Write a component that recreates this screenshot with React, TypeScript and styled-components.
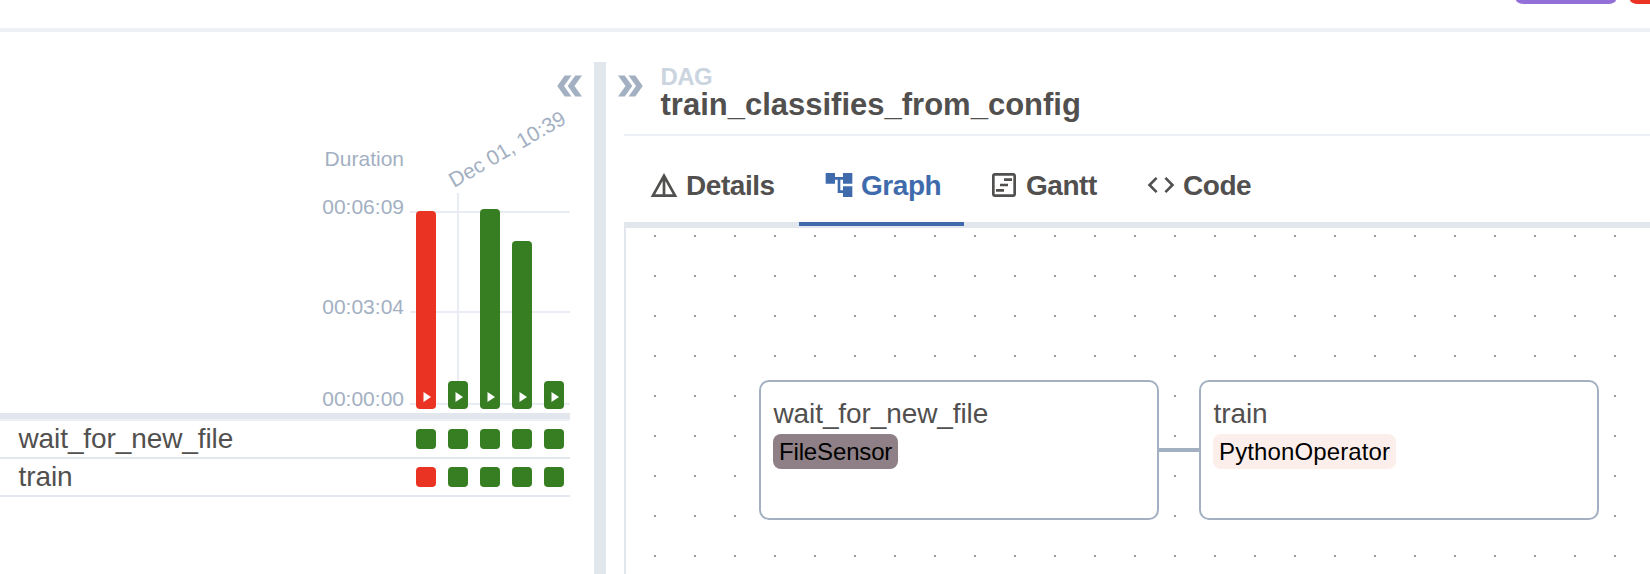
import React from "react";
import styled, { createGlobalStyle } from "styled-components";

const colors = {
  text: "#51504f",
  muted: "#a3b0c2",
  faint: "#cbd5e0",
  line: "#e2e7ee",
  lightLine: "#edf1f6",
  active: "#3f6bad",
  success: "#377e22",
  failed: "#ea3323",
};

const GlobalStyle = createGlobalStyle`
  * { box-sizing: border-box; }
  body {
    margin: 0;
    background: #fff;
    color: ${colors.text};
    font-family: "Liberation Sans", Arial, sans-serif;
    overflow: hidden;
  }
`;

const Page = styled.div`
  display: flex;
  flex-direction: column;
  height: 574px;
  overflow: hidden;
`;

const StatusBar = styled.header`
  display: flex;
  flex: none;
  justify-content: flex-end;
  align-items: flex-start;
  gap: 14px;
  height: 32px;
  border-bottom: 4px solid ${colors.lightLine};
`;

const StatusPill = styled.div<{ $color: string; $width: number; $last?: boolean }>`
  width: ${(p) => p.$width}px;
  height: 4px;
  background: ${(p) => p.$color};
  border-radius: 0 0 ${(p) => (p.$last ? 0 : 8)}px 8px / 0 0 ${(p) => (p.$last ? 0 : 4)}px 4px;
`;

const Main = styled.main`
  display: flex;
  flex: 1;
  margin-top: 30px;
`;

const GridPanel = styled.section`
  width: 594px;
  flex: none;
`;

const PanelTop = styled.div`
  display: flex;
  justify-content: flex-end;
  height: 42px;
  padding: 6px 6px 0 0;
`;

const ToggleButton = styled.button<{ $flip?: boolean }>`
  display: flex;
  flex: none;
  width: 36px;
  height: 36px;
  padding: 0;
  border: 0;
  background: none;
  color: ${colors.muted};
  transform: ${(p) => (p.$flip ? "rotate(180deg)" : "none")};
`;

const Chart = styled.div`
  display: flex;
  width: 570px;
  height: 315px;
  border-bottom: 6px solid ${colors.line};
`;

const AxisLabels = styled.div`
  width: 404px;
  padding-top: 44px;
  text-align: right;
`;

const AxisLabel = styled.div<{ $gap?: number }>`
  margin-top: ${(p) => p.$gap ?? 0}px;
  color: ${colors.muted};
  font-size: 21px;
  line-height: 22px;
`;

const Plot = styled.div`
  display: flex;
  align-items: flex-end;
  gap: 12px;
  width: 160px;
  height: 216px;
  margin: 89px 0 0 6px;
  padding-left: 6px;
  background-image: linear-gradient(#e9edf3, #e9edf3), linear-gradient(#e9edf3, #e9edf3),
    linear-gradient(#e9edf3, #e9edf3), linear-gradient(#e9edf3, #e9edf3);
  background-repeat: no-repeat;
  background-size: 160px 2px, 160px 2px, 160px 2px, 2px 216px;
  background-position: 0 18px, 0 118px, 0 210px, 47px 0;
`;

const Bar = styled.div<{ $height: number; $failed?: boolean }>`
  position: relative;
  display: flex;
  align-items: flex-end;
  justify-content: center;
  width: 20px;
  height: ${(p) => p.$height}px;
  padding: 0 0 7px 1px;
  border-radius: 4px;
  background: ${(p) => (p.$failed ? colors.failed : colors.success)};
`;

const RunDate = styled.span`
  position: absolute;
  left: 6px;
  bottom: 217px;
  color: ${colors.muted};
  font-size: 21px;
  line-height: 22px;
  white-space: nowrap;
  transform: rotate(-30deg);
  transform-origin: 0 18px;
`;

const TaskRow = styled.div<{ $first?: boolean }>`
  display: flex;
  align-items: center;
  width: 570px;
  height: ${(p) => (p.$first ? 40 : 38)}px;
  border-top: ${(p) => (p.$first ? `2px solid ${colors.lightLine}` : "0")};
  border-bottom: 2px solid ${colors.line};
`;

const TaskName = styled.span`
  width: 416px;
  padding-left: 18.5px;
  font-size: 28px;
  line-height: 36px;
  letter-spacing: -0.1px;
`;

const Instances = styled.div`
  display: flex;
  gap: 12px;
`;

const Instance = styled.div<{ $failed?: boolean }>`
  width: 20px;
  height: 20px;
  border-radius: 4px;
  background: ${(p) => (p.$failed ? colors.failed : colors.success)};
`;

const Divider = styled.div`
  width: 12px;
  flex: none;
  background: ${colors.line};
`;

const DetailPanel = styled.section`
  display: flex;
  flex: 1;
  flex-direction: column;
  min-width: 0;
`;

const Heading = styled.div`
  display: flex;
  gap: 12.5px;
  height: 72px;
  padding: 6px 0 0 6px;
`;

const Titles = styled.div`
  margin-top: -3px;
`;

const Kind = styled.div`
  color: ${colors.faint};
  font-size: 24px;
  font-weight: 700;
  line-height: 24px;
  letter-spacing: -0.6px;
`;

const Title = styled.h1`
  margin: -1px 0 0;
  font-size: 31px;
  font-weight: 700;
  line-height: 34px;
`;

const Tabs = styled.nav`
  display: flex;
  flex: none;
  height: 92px;
  margin-left: 18px;
  padding-top: 12px;
  border-top: 2px solid ${colors.lightLine};
`;

const Tab = styled.button<{ $width: number; $active?: boolean }>`
  display: flex;
  align-items: center;
  gap: 6px;
  width: ${(p) => p.$width}px;
  padding: 0 0 0 24px;
  border: 0;
  border-bottom: 4px solid ${(p) => (p.$active ? colors.active : colors.line)};
  background: none;
  color: ${(p) => (p.$active ? colors.active : colors.text)};
  font: 700 28px/32px "Liberation Sans", Arial, sans-serif;
  letter-spacing: -0.45px;
  white-space: nowrap;
`;

const TabLabel = styled.span`
  padding-top: 2px;
`;

const TabFiller = styled.div`
  flex: 1;
  border-bottom: 4px solid ${colors.line};
`;

const Icon = styled.svg`
  flex: none;
  fill: currentColor;
`;

const Canvas = styled.div`
  position: relative;
  flex: 1;
  margin-left: 18px;
  border-top: 2px solid ${colors.line};
  border-left: 2px solid ${colors.line};
  background-image: conic-gradient(from 270deg at 2px 2px, #9c9c9c 90deg, transparent 0);
  background-size: 40px 40px;
  background-position: 28px 7px;
`;

const Node = styled.div<{ $x: number }>`
  position: absolute;
  left: ${(p) => p.$x}px;
  top: 152px;
  width: 400px;
  height: 140px;
  padding: 16px 12px;
  border: 2px solid ${colors.muted};
  border-radius: 10px;
  background: #fff;
`;

const NodeName = styled.div`
  padding-left: 0.5px;
  font-size: 28px;
  line-height: 32px;
  letter-spacing: -0.1px;
`;

const Operator = styled.span<{ $color: string; $width: number; $tracking: number }>`
  display: block;
  width: ${(p) => p.$width}px;
  height: 35px;
  margin-top: 4px;
  padding-left: 6px;
  border-radius: 8px;
  background: ${(p) => p.$color};
  color: #000;
  font-size: 24px;
  line-height: 35px;
  letter-spacing: ${(p) => p.$tracking}px;
`;

const Edge = styled.div`
  position: absolute;
  left: 533px;
  top: 220px;
  width: 40px;
  height: 4px;
  background: ${colors.muted};
`;

const DoubleArrow = () => (
  <Icon width="36" height="36" viewBox="0 0 24 24">
    <path d="M15.5 5H11l5 7-5 7h4.5l5-7z" />
    <path d="M8.5 5H4l5 7-5 7h4.5l5-7z" />
  </Icon>
);

const tabs = [
  { name: "Details", width: 175, path: "M12 3 2 21h20L12 3zm1 5.92L18.6 19H13V8.92zm-2 0V19H5.4L11 8.92z" },
  { name: "Graph", width: 165, path: "M22 11V3h-7v3H9V3H2v8h7V8h2v10h4v3h7v-8h-7v3h-2V8h2v3z" },
  {
    name: "Gantt",
    width: 157,
    path: "M19 3H5c-1.1 0-2 .9-2 2v14c0 1.1.9 2 2 2h14c1.1 0 2-.9 2-2V5c0-1.1-.9-2-2-2zm0 16H5V5h14v14zM12 7h6v2h-6zM9 11h6v2H9zM6 15h6v2H6z",
  },
  {
    name: "Code",
    width: 154,
    path: "M9.4 16.6 4.8 12l4.6-4.6L8 6l-6 6 6 6 1.4-1.4zm5.2 0 4.6-4.6-4.6-4.6L16 6l6 6-6 6-1.4-1.4z",
  },
];

const runs = [
  { height: 198, failed: true },
  { height: 28, date: "Dec 01, 10:39" },
  { height: 200 },
  { height: 168 },
  { height: 28 },
];

const tasks = [
  { name: "wait_for_new_file", failed: [false, false, false, false, false] },
  { name: "train", failed: [true, false, false, false, false] },
];

export default function App() {
  return (
    <Page>
      <GlobalStyle />
      <StatusBar>
        <StatusPill $color="#9370d8" $width={100} />
        <StatusPill $color={colors.failed} $width={20} $last />
      </StatusBar>
      <Main>
        <GridPanel>
          <PanelTop>
            <ToggleButton $flip aria-label="Collapse grid">
              <DoubleArrow />
            </ToggleButton>
          </PanelTop>
          <Chart>
            <AxisLabels>
              <AxisLabel>Duration</AxisLabel>
              <AxisLabel $gap={26}>00:06:09</AxisLabel>
              <AxisLabel $gap={78}>00:03:04</AxisLabel>
              <AxisLabel $gap={70}>00:00:00</AxisLabel>
            </AxisLabels>
            <Plot>
              {runs.map((run, i) => (
                <Bar key={i} $height={run.height} $failed={run.failed}>
                  {run.date && <RunDate>{run.date}</RunDate>}
                  <svg width="8" height="10" viewBox="0 0 8 10">
                    <path d="M0.5 0v10L8 5z" fill="#fff" />
                  </svg>
                </Bar>
              ))}
            </Plot>
          </Chart>
          {tasks.map((task, i) => (
            <TaskRow key={task.name} $first={i === 0}>
              <TaskName>{task.name}</TaskName>
              <Instances>
                {task.failed.map((failed, j) => (
                  <Instance key={j} $failed={failed} />
                ))}
              </Instances>
            </TaskRow>
          ))}
        </GridPanel>
        <Divider />
        <DetailPanel>
          <Heading>
            <ToggleButton aria-label="Collapse details">
              <DoubleArrow />
            </ToggleButton>
            <Titles>
              <Kind>DAG</Kind>
              <Title>train_classifies_from_config</Title>
            </Titles>
          </Heading>
          <Tabs>
            {tabs.map((tab) => (
              <Tab key={tab.name} $width={tab.width} $active={tab.name === "Graph"}>
                <Icon width="32" height="32" viewBox="0 0 24 24">
                  <path d={tab.path} />
                </Icon>
                <TabLabel>{tab.name}</TabLabel>
              </Tab>
            ))}
            <TabFiller />
          </Tabs>
          <Canvas>
            <Edge />
            <Node $x={133}>
              <NodeName>wait_for_new_file</NodeName>
              <Operator $color="#8e8086" $width={125} $tracking={-0.15}>
                FileSensor
              </Operator>
            </Node>
            <Node $x={573}>
              <NodeName>train</NodeName>
              <Operator $color="#fcefeb" $width={183} $tracking={0.12}>
                PythonOperator
              </Operator>
            </Node>
          </Canvas>
        </DetailPanel>
      </Main>
    </Page>
  );
}
